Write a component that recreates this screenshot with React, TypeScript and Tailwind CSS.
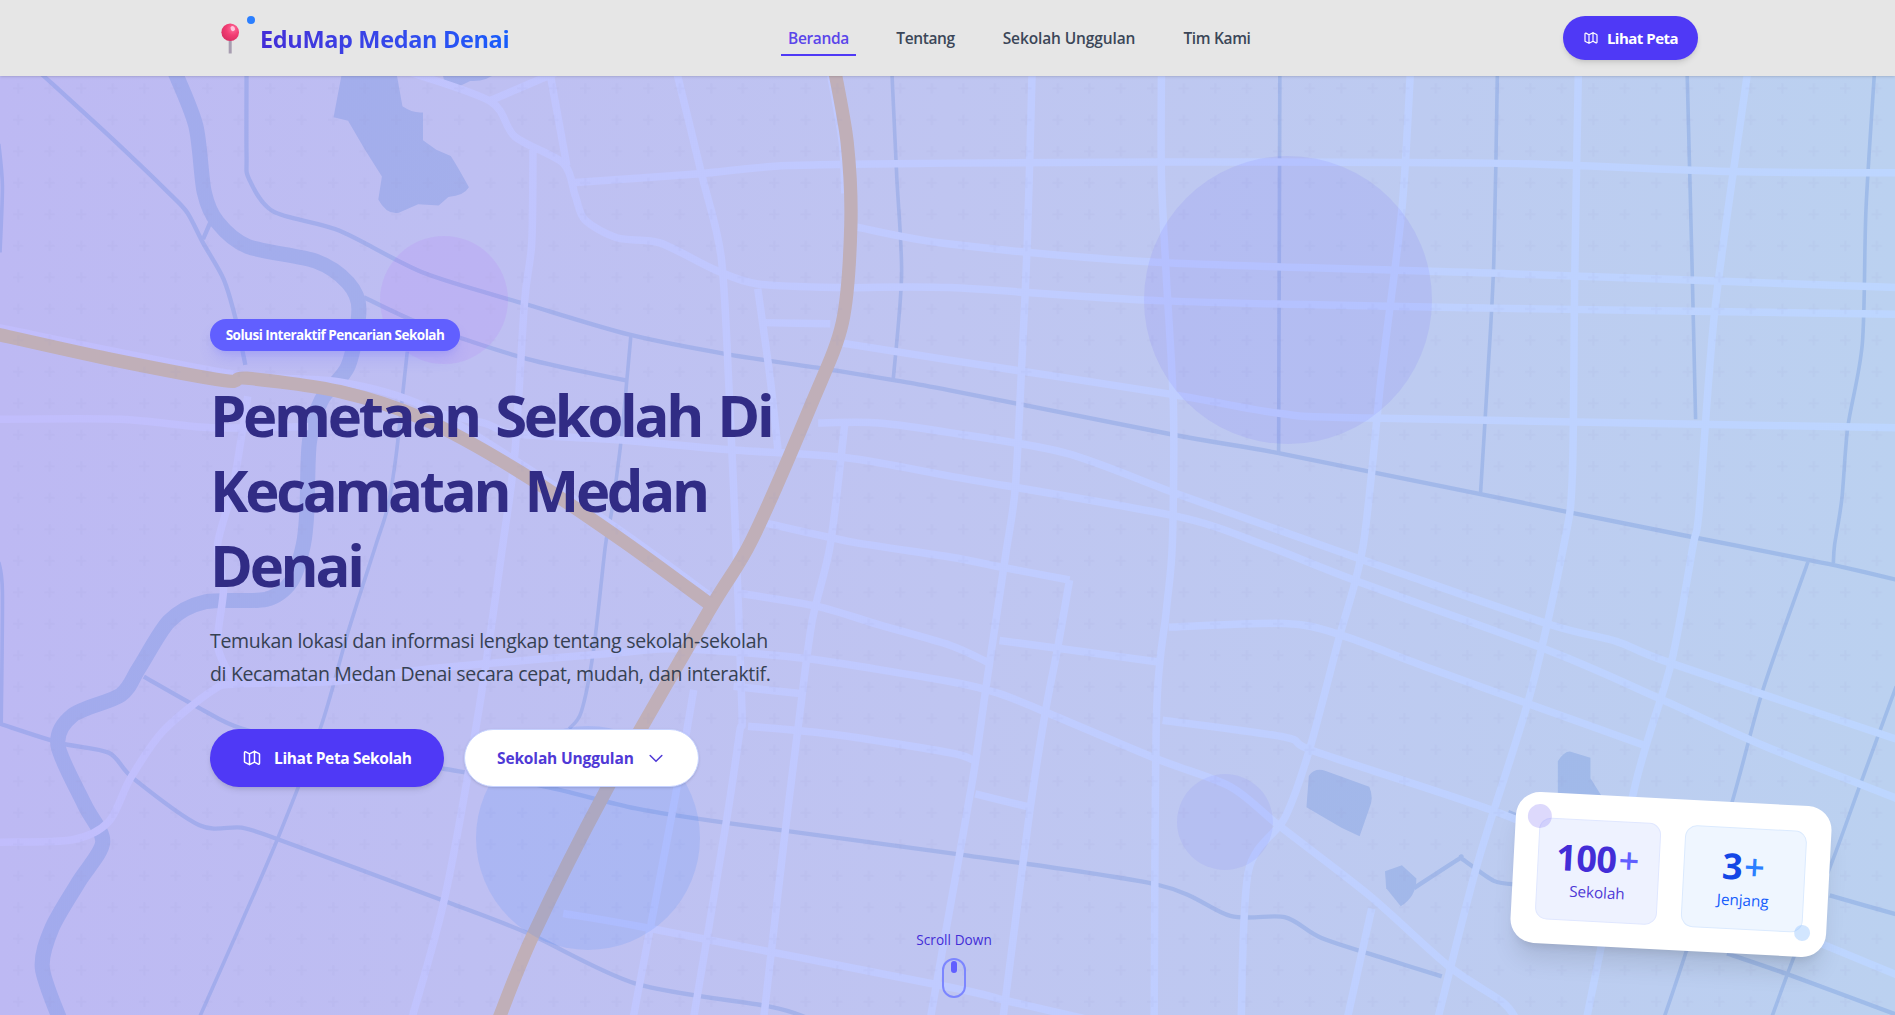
import React from "react";

type Line = number[];

/* Smooth curve through a flat list of x, y pairs. */
function smooth(p: Line): string {
  const n = p.length / 2;
  const x = (i: number) => p[2 * Math.max(0, Math.min(n - 1, i))];
  const y = (i: number) => p[2 * Math.max(0, Math.min(n - 1, i)) + 1];
  let d = `M${x(0)} ${y(0)}`;
  for (let i = 0; i < n - 1; i++) {
    d += `C${x(i) + (x(i + 1) - x(i - 1)) / 7} ${y(i) + (y(i + 1) - y(i - 1)) / 7} ${
      x(i + 1) - (x(i + 2) - x(i)) / 7
    } ${y(i + 1) - (y(i + 2) - y(i)) / 7} ${x(i + 1)} ${y(i + 1)}`;
  }
  return d;
}

const streams: Line[] = [
  [33, 60, 93, 115, 140, 160, 155, 176, 168, 201, 185, 231, 195, 264, 203, 302],
  [174, 184, 168, 198],
  [204, 60, 204, 129, 206, 148, 226, 175, 281, 191, 351, 226, 436, 252, 521, 277, 601, 293, 687, 306, 742, 315, 786, 323, 972, 360, 1058, 375, 1225, 409, 1398, 444, 1449, 454, 1499, 464, 1519, 468, 1570, 480],
  [301, 246, 351, 269, 436, 297, 519, 315],
  [366, 636, 451, 651, 526, 669, 601, 681, 786, 706, 957, 732, 1018, 758, 1063, 759, 1093, 776, 1148, 794, 1193, 808],
  [119, 560, 165, 586, 200, 603, 280, 622, 366, 636],
  [0, 599, 50, 615, 90, 623, 110, 644, 165, 683, 200, 685, 231, 695, 366, 745, 436, 772, 526, 814, 637, 833, 667, 842],
  [1170, 735, 1207, 711, 1210, 711, 1236, 729, 1256, 732],
  [1429, 789, 1484, 808, 1570, 840],
  [1514, 741, 1570, 757],
  [1248, 672, 1280, 685],
];

const canals: Line[] = [
  [522, 278, 519, 311, 514, 364, 506, 424, 501, 451, 491, 539, 481, 589, 471, 603],
  [337, 291, 333, 328, 328, 375, 321, 419, 311, 451, 288, 523, 266, 600, 231, 691, 200, 763, 165, 842],
  [738, 60, 742, 146, 746, 228, 739, 315],
  [1059, 60, 1058, 375],
  [1239, 60, 1236, 217, 1231, 311, 1225, 409],
  [1396, 60, 1400, 217, 1403, 347],
  [1551, 60, 1544, 173, 1541, 284, 1529, 353, 1524, 413, 1518, 451, 1517, 466],
  [1496, 465, 1459, 570, 1434, 661, 1396, 785, 1377, 842],
  [1569, 568, 1539, 650, 1516, 713, 1484, 793, 1466, 842],
  [-1, 119, 2, 154, 0, 209],
  [-1, 465, 2, 490, 1, 599],
];

const river: Line = [
  144, 58, 162, 104, 169, 159, 180, 184, 205, 204, 261, 216, 288, 234, 297, 256, 288, 303, 266, 331, 256, 366, 254, 422, 251, 451, 241, 481, 220, 496, 170, 498, 140, 514, 115, 553, 100, 575, 60, 592, 48, 617, 70, 666, 85, 697, 65, 730, 43, 768, 35, 801, 50, 845,
];

const ponds: string[] = [
  "M283 60L276 97L288 100L302 124L316 146L313 165Q320 178 330 176L346 169L363 170L371 163Q384 162 388 155Q380 140 373 129L361 124L350 116L350 93Q342 94 333 88L328 60Z",
  "M366 60L368 69L381 71L389 67Q402 68 411 60Z",
  "M1083 642Q1088 635 1097 638L1133 651Q1137 660 1133 669L1125 692L1110 685L1081 668Z",
  "M1160 716L1172 727Q1172 742 1159 750L1147 735L1146 721Z",
  "M1289 630Q1294 622 1299 622L1316 627L1316 644L1326 660L1289 660Z",
];

const roads: Line[] = [
  [340, 60, 406, 84, 426, 113, 466, 135, 476, 162, 484, 182, 511, 197, 546, 201, 591, 223, 627, 235, 697, 238, 786, 238, 962, 249, 1233, 255, 1570, 260],
  [460, 60, 404, 84],
  [455, 60, 469, 137],
  [441, 124, 440, 201, 434, 250, 426, 375, 416, 451, 396, 589, 368, 743, 341, 842],
  [476, 151, 576, 144, 652, 137, 786, 135, 957, 134, 1233, 135, 1434, 142, 1570, 143],
  [560, 60, 581, 146, 597, 215, 604, 339, 609, 451, 614, 589, 612, 606, 601, 680, 574, 842],
  [709, 188, 786, 202, 957, 217, 1233, 226, 1570, 238],
  [627, 239, 637, 311, 644, 375],
  [632, 267, 687, 268],
  [697, 284, 786, 298, 967, 326, 1058, 342, 1133, 346, 1570, 354],
  [0, 347, 100, 347, 175, 354, 255, 353],
  [345, 338, 400, 350, 426, 359, 511, 364, 601, 372, 702, 379, 786, 394, 972, 427, 1046, 451, 1123, 481, 1283, 539, 1373, 578, 1459, 617, 1570, 661],
  [677, 350, 727, 350, 786, 358, 882, 375, 972, 408, 1090, 450, 1158, 474, 1283, 517, 1338, 531, 1383, 549, 1570, 612],
  [699, 351, 687, 451, 672, 514, 662, 589, 649, 694, 632, 842],
  [634, 433, 702, 448, 786, 461, 832, 470, 885, 480],
  [885, 480, 875, 537, 865, 589, 852, 672, 830, 842],
  [612, 491, 677, 502, 727, 517, 786, 534, 817, 548],
  [0, 697, 60, 695, 90, 680, 108, 644, 135, 605, 175, 572, 195, 566, 276, 564, 351, 554, 501, 541, 551, 537, 584, 538, 667, 545, 786, 564, 827, 574, 867, 590, 957, 628, 1018, 651, 1058, 683, 1133, 741, 1198, 799, 1243, 829, 1255, 844],
  [205, 328, 193, 402, 180, 451, 185, 487, 180, 534, 193, 564],
  [607, 568, 662, 574],
  [619, 601, 692, 608, 786, 623, 805, 629],
  [574, 571, 559, 658, 539, 763, 524, 842],
  [466, 756, 536, 768, 786, 817, 832, 828, 902, 844],
  [854, 60, 850, 201, 845, 311, 840, 405, 832, 460, 817, 561, 805, 644, 782, 774, 770, 842],
  [961, 60, 961, 146, 965, 228, 971, 339, 970, 451, 965, 506, 957, 589, 955, 842],
  [1167, 60, 1160, 173, 1143, 311, 1128, 451, 1108, 528, 1083, 622, 1063, 677, 1033, 721, 1027, 842],
  [1306, 60, 1303, 228, 1301, 394, 1294, 451, 1266, 575, 1223, 713, 1190, 842],
  [1446, 60, 1419, 256, 1406, 422, 1401, 451, 1383, 548, 1353, 650, 1313, 842],
  [967, 519, 1063, 516, 1108, 525, 1183, 553, 1283, 589, 1361, 617],
  [962, 596, 1063, 610, 1088, 622, 1233, 670, 1350, 718, 1480, 770, 1570, 807],
  [827, 530, 960, 548],
  [807, 657, 852, 668],
  [1135, 752, 1115, 842],
  [-2, 271, 190, 309, 281, 316, 351, 336, 431, 384, 516, 441, 590, 495],
  [687, 60, 697, 118, 699, 160],
];

const highways: Line[] = [
  [-5, 276, 90, 297, 186, 315, 204, 313, 281, 324, 351, 347, 431, 391, 516, 448, 590, 502],
  [690, 55, 701, 118, 704, 187, 697, 267, 672, 333, 622, 447, 587, 505, 501, 655, 441, 774, 412, 845],
];

function CityMap() {
  return (
    <svg
      className="absolute inset-0 h-full w-full"
      viewBox="0 0 1568 840"
      preserveAspectRatio="none"
      fill="none"
      aria-hidden="true"
    >
      <defs>
        <linearGradient id="land" gradientUnits="userSpaceOnUse" x1="0" y1="0" x2="1568" y2="0">
          <stop offset="0" stopColor="#bdb9f3" />
          <stop offset="0.5" stopColor="#bfc5f1" />
          <stop offset="1" stopColor="#bbd1f0" />
        </linearGradient>
        <linearGradient id="road" gradientUnits="userSpaceOnUse" x1="0" y1="0" x2="1568" y2="0">
          <stop offset="0" stopColor="#c1bdfc" />
          <stop offset="0.5" stopColor="#c0cbff" />
          <stop offset="1" stopColor="#bdd6ff" />
        </linearGradient>
        <linearGradient id="water" gradientUnits="userSpaceOnUse" x1="0" y1="0" x2="1568" y2="0">
          <stop offset="0" stopColor="#a2aaed" />
          <stop offset="0.5" stopColor="#a5b4ea" />
          <stop offset="1" stopColor="#9fbce9" />
        </linearGradient>
        <pattern
          id="plus"
          width="60"
          height="60"
          patternUnits="userSpaceOnUse"
          patternTransform="scale(0.8275) translate(12.9 83.2) scale(1.05)"
        >
          <path
            fill="#8f8fc4"
            fillOpacity="0.07"
            d="M36 34v-4h-2v4h-4v2h4v4h2v-4h4v-2h-4zm0-30V0h-2v4h-4v2h4v4h2V6h4V4h-4zM6 34v-4H4v4H0v2h4v4h2v-4h4v-2H6zM6 4V0H4v4H0v2h4v4h2V6h4V4H6z"
          />
        </pattern>
        <filter id="soft" filterUnits="userSpaceOnUse" x="0" y="0" width="1568" height="840">
          <feGaussianBlur stdDeviation="0.5" />
        </filter>
      </defs>
      <rect width="1568" height="840" fill="url(#land)" />
      <g filter="url(#soft)">
        <g stroke="url(#water)" strokeLinejoin="round">
          <path d={smooth(river)} strokeWidth="12.5" />
          <g strokeWidth="3.6">
            {streams.map((l, i) => (
              <path key={i} d={smooth(l)} />
            ))}
          </g>
          <g strokeWidth="3">
            {canals.map((l, i) => (
              <path key={i} d={smooth(l)} />
            ))}
          </g>
        </g>
        <g fill="url(#water)">
          {ponds.map((d, i) => (
            <path key={i} d={d} />
          ))}
        </g>
        <g stroke="url(#road)" strokeWidth="6.2" strokeLinejoin="round">
          {roads.map((l, i) => (
            <path key={i} d={smooth(l)} />
          ))}
        </g>
        <g stroke="#c0afb8" strokeWidth="11" strokeLinejoin="round">
          {highways.map((l, i) => (
            <path key={i} d={smooth(l)} />
          ))}
        </g>
      </g>
      <rect width="1568" height="840" fill="url(#plus)" />
    </svg>
  );
}

function MapIcon({ className }: { className: string }) {
  return (
    <svg className={className} viewBox="0 0 24 24" fill="none" stroke="currentColor" strokeWidth="1.8" strokeLinecap="round" strokeLinejoin="round">
      <path d="M9 20l-5.447-2.724A1 1 0 013 16.382V5.618a1 1 0 011.447-.894L9 7m0 13l6-3m-6 3V7m6 10l4.553 2.276A1 1 0 0021 18.382V7.618a1 1 0 00-.553-.894L15 4m0 13V4m0 0L9 7" />
    </svg>
  );
}

function PinLogo() {
  return (
    <svg className="h-[32px] w-[20px]" viewBox="0 0 20 32" fill="none">
      <defs>
        <radialGradient id="ball" cx="0.65" cy="0.3" r="0.75">
          <stop offset="0" stopColor="#ff6f9c" />
          <stop offset="0.5" stopColor="#f23d73" />
          <stop offset="1" stopColor="#d92e62" />
        </radialGradient>
      </defs>
      <rect x="8.7" y="17" width="3" height="13.5" fill="#a79db0" />
      <circle cx="10.2" cy="9.2" r="8.8" fill="url(#ball)" />
      <ellipse cx="12.8" cy="5.6" rx="2.1" ry="2.6" fill="#ffc4dc" transform="rotate(-30 12.8 5.6)" />
    </svg>
  );
}

const links = [
  { label: "Tentang", cls: "w-[75px] tracking-[-0.4px]" },
  { label: "Sekolah Unggulan", cls: "w-[148px] tracking-[-0.12px]" },
  { label: "Tim Kami", cls: "w-[84px] tracking-[-0.35px]" },
];

function Header() {
  return (
    <header className="relative z-10 h-[76px] bg-[#e6e6e6] shadow-sm">
      <div className="ml-[210px] flex h-full w-[1488px] items-center">
        <div className="flex w-[571px] items-center pl-[10px]">
          <div className="relative pt-[2px]">
            <PinLogo />
            <span className="absolute -top-[5px] left-[27px] size-2 rounded-full bg-[#2b7fff]" />
          </div>
          <span className="mt-[2px] ml-[20px] bg-gradient-to-r from-[#432dd7] to-[#155dfc] bg-clip-text text-[23.5px] leading-8 font-bold tracking-[-0.35px] whitespace-nowrap text-transparent">
            EduMap Medan Denai
          </span>
        </div>
        <nav className="mt-[2px] flex flex-1 gap-8 text-[15.5px] leading-6 font-semibold whitespace-nowrap text-[#3b4658]">
          <a className="h-[33px] w-[75px] border-b-2 border-[#4f39f6] pt-[3px] text-center tracking-[-0.35px] text-[#5a45ea]">Beranda</a>
          {links.map((l) => (
            <a key={l.label} className={l.cls + " pt-[3px] text-center"}>
              {l.label}
            </a>
          ))}
        </nav>
        <button className="flex h-11 w-[135px] items-center justify-center gap-[8px] rounded-full bg-[#4f39f6] text-[15px] font-bold tracking-[-0.5px] whitespace-nowrap text-white shadow-md">
          <MapIcon className="size-4" />
          Lihat Peta
        </button>
      </div>
    </header>
  );
}

function Stat({ value, label, box, num, plus, text }: { value: string; label: string; box: string; num: string; plus: string; text: string }) {
  return (
    <div className={"flex h-[102px] w-[122px] flex-col items-center justify-center rounded-xl border " + box}>
      <div className={"mt-[2px] -ml-[2px] flex text-[36px] leading-[40px] font-bold " + num}>
        <span className="tracking-[-0.4px]">{value}</span>
        <span className={"ml-[2px] font-semibold " + plus}>+</span>
      </div>
      <div className={"mt-[1px] text-[15.3px] leading-6 font-medium tracking-[-0.05px] " + text}>{label}</div>
    </div>
  );
}

function StatsCard() {
  return (
    <div className="absolute top-[799px] left-[1513px] flex h-[151px] w-[316px] rotate-3 items-center justify-between rounded-3xl bg-white px-6 shadow-xl">
      <Stat value="100" label="Sekolah" box="border-[#e0e7ff] bg-[#eef2ff]" num="text-[#432dd7]" plus="text-[#615fff]" text="text-[#4f39d6]" />
      <Stat value="3" label="Jenjang" box="border-[#dbeafe] bg-[#eff6ff]" num="text-[#1447e6]" plus="text-[#2b7fff]" text="text-[#155dfc]" />
      <span className="absolute top-3 left-3 size-6 rounded-full bg-[#8e80f5]/30" />
      <span className="absolute right-4 bottom-4 size-4 rounded-full bg-[#8ec0ff]/40" />
    </div>
  );
}

export default function App() {
  return (
    <div className="relative flex h-[1015px] w-[1895px] flex-col overflow-hidden font-['Open_Sans','Noto_Sans',sans-serif]">
      <CityMap />
      <span className="absolute top-[156px] left-[1144px] size-[288px] rounded-full bg-[#615fff]/11" />
      <span className="absolute top-[236px] left-[380px] size-32 rounded-full bg-[#ad46ff]/9" />
      <span className="absolute top-[726px] left-[476px] size-56 rounded-full bg-[#2b7fff]/13" />
      <span className="absolute top-[774px] left-[1177px] size-24 rounded-full bg-[#615fff]/9" />
      <Header />
      <main className="relative ml-[210px] flex w-[620px] flex-col items-start pt-[243px]">
        <span className="flex h-8 w-[250px] items-center justify-center rounded-full bg-[#615fff] text-[13.5px] font-bold tracking-[-0.5px] whitespace-nowrap text-white shadow-lg shadow-[#615fff]/20">
          Solusi Interaktif Pencarian Sekolah
        </span>
        <h1 className="mt-[26px] text-[58px] leading-[75px] font-bold tracking-[-3.3px] [word-spacing:4.5px] whitespace-nowrap text-[#312c85]">
          Pemetaan Sekolah Di
          <br />
          Kecamatan Medan
          <br />
          Denai
        </h1>
        <p className="mt-[22px] text-[19.5px] leading-[33px] tracking-[-0.3px] whitespace-nowrap text-[#364153]">
          Temukan lokasi dan informasi lengkap tentang sekolah-sekolah
          <br />
          <span className="tracking-[-0.34px]">di Kecamatan Medan Denai secara cepat, mudah, dan interaktif.</span>
        </p>
        <div className="mt-[39px] flex gap-[20px] text-[15.5px] font-bold whitespace-nowrap">
          <button className="flex h-[58px] w-[234px] items-center gap-[12px] rounded-full bg-[#4f39f6] pl-8 tracking-[-0.35px] text-white shadow-md">
            <MapIcon className="size-5" />
            <span className="pt-[2px]">Lihat Peta Sekolah</span>
          </button>
          <button className="flex h-[58px] w-[235px] items-center gap-[12px] rounded-full border border-[#c6d2ff] bg-white pl-8 tracking-[-0.15px] text-[#4f39d6] shadow-sm">
            <span className="pt-[2px]">Sekolah Unggulan</span>
            <svg className="size-5" viewBox="0 0 24 24" fill="none" stroke="currentColor" strokeWidth="1.8" strokeLinecap="round" strokeLinejoin="round">
              <path d="M19 9l-7 7-7-7" />
            </svg>
          </button>
        </div>
      </main>
      <div className="absolute top-[930px] left-[894px] flex w-[120px] flex-col items-center">
        <span className="text-[13.6px] leading-5 font-medium tracking-[0.05px] text-[#432dd7]">Scroll Down</span>
        <span className="mt-2 flex h-10 w-6 justify-center rounded-full border-2 border-[#7c86ff] pt-[1px]">
          <span className="h-3 w-1.5 rounded-full bg-[#615fff]" />
        </span>
      </div>
      <StatsCard />
    </div>
  );
}
